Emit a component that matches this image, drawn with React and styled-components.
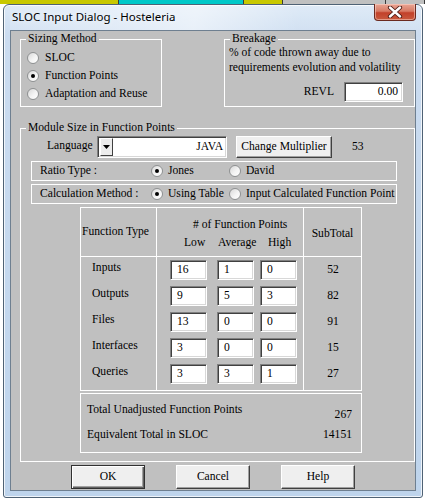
import React from "react";
import styled, { createGlobalStyle } from "styled-components";

const GlobalStyle = createGlobalStyle`
  html, body {
    margin: 0;
    padding: 0;
    background: #fff;
    width: 425px;
    height: 499px;
    overflow: hidden;
  }
  * { box-sizing: border-box; }
`;

const Page = styled.div`
  width: 425px;
  height: 499px;
  display: flex;
  flex-direction: column;
`;

const Strip = styled.div`
  display: flex;
  height: 4px;
`;

const StripPart = styled.div`
  width: ${(p) => p.$w}px;
  background: ${(p) => p.$c};
  border-right: 1px solid #3a3a3a;
`;

const Window = styled.div`
  margin-left: 3px;
  width: 420px;
  height: 494px;
  border: 1px solid #4f6275;
  border-radius: 6px 6px 3px 3px;
  background: linear-gradient(180deg, #dbe8f6 0px, #cbdcf0 30px, #bed4ec 100%);
  box-shadow: inset 0 0 0 1px rgba(255, 255, 255, 0.75);
  display: flex;
  flex-direction: column;
  padding: 0 6px 6px 6px;
`;

const TitleBar = styled.div`
  height: 25px;
  display: flex;
  align-items: flex-start;
  margin: 0 -6px 0 0;
  padding-left: 2px;
  background: linear-gradient(100deg, rgba(255,255,255,0.15) 0%, rgba(255,255,255,0.55) 45%, rgba(255,255,255,0.1) 70%);
`;

const Title = styled.span`
  font-family: "Noto Sans", "Open Sans", sans-serif;
  font-size: 11.5px;
  line-height: 14px;
  margin-top: 5px;
  color: #000;
  text-shadow: 0 0 6px rgba(255, 255, 255, 0.9);
`;

const CloseButton = styled.div`
  margin-left: auto;
  margin-right: 6px;
  margin-top: -1px;
  width: 42px;
  height: 17px;
  border: 1px solid #6b2a20;
  border-top: none;
  border-radius: 0 0 4px 4px;
  background: linear-gradient(180deg, #e9a594 0%, #d77a64 45%, #c2412a 55%, #c85a3e 100%);
  box-shadow: inset 0 0 0 1px rgba(255, 220, 210, 0.5);
  display: flex;
  align-items: center;
  justify-content: center;
`;

const Client = styled.div`
  flex: 1;
  background: #c0c0c0;
  border: 1px solid #6e7f90;
  display: flex;
  flex-direction: column;
  padding: 1px 0 1px 9px;
  font-family: "Liberation Serif", "Times New Roman", serif;
  font-size: 11.6px;
  line-height: 14px;
  color: #000;
`;

const TopRow = styled.div`
  display: flex;
  justify-content: space-between;
  height: 75px;
`;

const Group = styled.fieldset`
  margin: 0;
  padding: 0;
  border: 1px solid #fff;
  min-width: 0;
  width: ${(p) => p.$w}px;
`;

const Legend = styled.legend`
  margin-left: 5px;
  padding: 0 2px;
  font-size: 11.6px;
  line-height: 14px;
`;

const RadioList = styled.div`
  display: flex;
  flex-direction: column;
  padding: 3px 0 0 6px;
`;

const RadioRow = styled.label`
  display: flex;
  align-items: center;
  gap: 6px;
  height: 18px;
  white-space: nowrap;
`;

const RadioCircle = styled.span`
  position: relative;
  flex: none;
  width: 12px;
  height: 12px;
  border-radius: 50%;
  border: 1px solid #8f9192;
  background: linear-gradient(135deg, #d8d8d8 0%, #f4f4f4 55%, #fff 100%);
  &::after {
    content: "";
    display: ${(p) => (p.$on ? "block" : "none")};
    position: absolute;
    left: 3px;
    top: 3px;
    width: 4px;
    height: 4px;
    border-radius: 50%;
    background: #000;
  }
`;

const BreakText = styled.div`
  padding-left: 4px;
  margin-top: -1px;
  line-height: 15px;
`;

const RevlRow = styled.div`
  display: flex;
  justify-content: flex-end;
  align-items: center;
  gap: 10px;
  margin-top: 7px;
  padding-right: 11px;
`;

const TextBox = styled.div`
  width: ${(p) => p.$w}px;
  height: 20px;
  background: #fff;
  border-top: 1px solid #808080;
  border-left: 1px solid #808080;
  border-right: 1px solid #fff;
  border-bottom: 1px solid #fff;
  box-shadow: inset 1px 1px 0 #404040, inset -1px -1px 0 #d8d8d8;
  display: flex;
  align-items: center;
  justify-content: ${(p) => (p.$right ? "flex-end" : "flex-start")};
  padding: 0 4px 0 6px;
`;

const ModuleGroup = styled(Group)`
  margin-top: 14px;
  height: 341px;
`;

const ModuleBody = styled.div`
  display: flex;
  flex-direction: column;
  padding-top: 1px;
`;

const LangRow = styled.div`
  display: flex;
  align-items: center;
  height: 22px;
  padding-left: 26px;
`;

const LangLabel = styled.span`
  width: 50px;
  margin-top: -3px;
`;

const Combo = styled.div`
  width: 130px;
  height: 22px;
  background: #fff;
  border-top: 1px solid #808080;
  border-left: 1px solid #808080;
  border-right: 1px solid #fff;
  border-bottom: 1px solid #fff;
  box-shadow: inset 1px 1px 0 #404040, inset -1px -1px 0 #d8d8d8;
  display: flex;
  align-items: center;
  padding: 1px 3px 1px 2px;
`;

const ComboButton = styled.div`
  width: 13px;
  height: 18px;
  background: #ececec;
  border: 1px solid;
  border-color: #fff #404040 #404040 #fff;
  display: flex;
  align-items: center;
  justify-content: center;
`;

const ComboValue = styled.span`
  margin-left: auto;
`;

const Button = styled.div`
  width: ${(p) => p.$w}px;
  height: ${(p) => p.$h}px;
  background: #efefef;
  border: 1px solid;
  border-color: ${(p) => (p.$default ? "#303030" : "#fff #404040 #404040 #fff")};
  box-shadow: ${(p) =>
    p.$default
      ? "inset 1px 1px 0 #fff, inset -1px -1px 0 #606060, inset -2px -2px 0 #a0a0a0"
      : "inset -1px -1px 0 #a0a0a0"};
  display: flex;
  align-items: center;
  justify-content: center;
  white-space: nowrap;
`;

const MultValue = styled.span`
  margin-left: 20px;
`;

const OptionBox = styled.div`
  margin: 3px 0 0 10px;
  width: 366px;
  height: 20px;
  border: 1px solid #fff;
  display: grid;
  grid-template-columns: 111px 78px auto;
  align-items: center;
  padding-left: 8px;
  white-space: nowrap;
`;

const OptionLabel = styled.label`
  display: flex;
  align-items: center;
  gap: 5px;
`;

const Table = styled.div`
  margin: 3px 0 0 59px;
  width: 282px;
  height: 184px;
  border: 1px solid #fff;
  display: grid;
  grid-template-columns: 76px 147px 57px;
  grid-template-rows: 49px 1fr;
`;

const HeadCell = styled.div`
  border-bottom: 1px solid #fff;
  border-right: ${(p) => (p.$last ? "none" : "1px solid #fff")};
  display: flex;
  flex-direction: column;
  justify-content: ${(p) => (p.$top ? "flex-start" : "center")};
  align-items: ${(p) => (p.$center ? "center" : "flex-start")};
  padding: ${(p) => p.$pad || "0"};
  white-space: nowrap;
`;

const SubHeads = styled.div`
  display: flex;
  margin-top: 4px;
  margin-left: -9px;
`;

const SubHead = styled.span`
  width: ${(p) => p.$w}px;
`;

const BodyCol = styled.div`
  border-right: ${(p) => (p.$last ? "none" : "1px solid #fff")};
  display: flex;
  flex-direction: column;
  padding-top: 3px;
`;

const BodyRow = styled.div`
  height: 26px;
  display: flex;
  align-items: flex-start;
  justify-content: ${(p) => (p.$center ? "center" : "flex-start")};
  padding: ${(p) => p.$pad || "0"};
`;

const Spacer = styled.span`
  width: ${(p) => p.$w}px;
  flex: none;
`;

const Totals = styled.div`
  margin: 2px 0 0 59px;
  width: 282px;
  height: 60px;
  border: 1px solid #fff;
  display: grid;
  grid-template-columns: 1fr auto;
  grid-template-rows: 25px 1fr;
  padding: 9px 9px 0 6px;
`;

const TotalValue = styled.span`
  padding-top: ${(p) => p.$top || 0}px;
  text-align: right;
`;

const ButtonRow = styled.div`
  display: flex;
  justify-content: center;
  gap: 31px;
  margin-top: 3px;
  margin-left: -9px;
`;

const Radio = ({ on, children }) => (
  <RadioRow>
    <RadioCircle $on={on} />
    {children}
  </RadioRow>
);

const Option = ({ on, children }) => (
  <OptionLabel>
    <RadioCircle $on={on} />
    {children}
  </OptionLabel>
);

const rows = [
  { name: "Inputs", low: 16, avg: 1, high: 0, sub: 52 },
  { name: "Outputs", low: 9, avg: 5, high: 3, sub: 82 },
  { name: "Files", low: 13, avg: 0, high: 0, sub: 91 },
  { name: "Interfaces", low: 3, avg: 0, high: 0, sub: 15 },
  { name: "Queries", low: 3, avg: 3, high: 1, sub: 27 },
];

export default function App() {
  return (
    <Page>
      <GlobalStyle />
      <Strip>
        <StripPart $w={119} $c="#c8c800" />
        <StripPart $w={125} $c="#00c8c8" />
        <StripPart $w={39} $c="#c8c800" />
        <StripPart $w={103} $c="#c0c0c0" />
        <StripPart $w={39} $c="#c0c0c0" />
      </Strip>
      <Window>
        <TitleBar>
          <Title>SLOC Input Dialog - Hosteleria</Title>
          <CloseButton>
            <svg width="16" height="12" viewBox="0 0 16 12">
              <path d="M3 1.5 L13 10.5 M13 1.5 L3 10.5" stroke="#4a1a14" strokeWidth="4.2" strokeLinecap="round" />
              <path d="M3 1.5 L13 10.5 M13 1.5 L3 10.5" stroke="#fff" strokeWidth="2.4" strokeLinecap="round" />
            </svg>
          </CloseButton>
        </TitleBar>
        <Client>
          <TopRow>
            <Group $w={142}>
              <Legend>Sizing Method</Legend>
              <RadioList>
                <Radio>SLOC</Radio>
                <Radio on>Function Points</Radio>
                <Radio>Adaptation and Reuse</Radio>
              </RadioList>
            </Group>
            <Group $w={191}>
              <Legend>Breakage</Legend>
              <BreakText>
                % of code thrown away due to
                <br />
                requirements evolution and volatility
              </BreakText>
              <RevlRow>
                <span>REVL</span>
                <TextBox $w={59} $right>0.00</TextBox>
              </RevlRow>
            </Group>
          </TopRow>

          <ModuleGroup $w={395}>
            <Legend>Module Size in Function Points</Legend>
            <ModuleBody>
              <LangRow>
                <LangLabel>Language</LangLabel>
                <Combo>
                  <ComboButton>
                    <svg width="7" height="4" viewBox="0 0 7 4">
                      <path d="M0 0 H7 L3.5 4 Z" fill="#000" />
                    </svg>
                  </ComboButton>
                  <ComboValue>JAVA</ComboValue>
                </Combo>
                <Spacer $w={9} />
                <Button $w={96} $h={22}>Change Multiplier</Button>
                <MultValue>53</MultValue>
              </LangRow>

              <OptionBox>
                <span>Ratio Type :</span>
                <Option on>Jones</Option>
                <Option>David</Option>
              </OptionBox>
              <OptionBox>
                <span>Calculation Method :</span>
                <Option on>Using Table</Option>
                <Option>Input Calculated Function Point</Option>
              </OptionBox>

              <Table>
                <HeadCell $pad="0 0 0 1px">Function Type</HeadCell>
                <HeadCell $top $pad="10px 0 0 36px">
                  <span># of Function Points</span>
                  <SubHeads>
                    <SubHead $w={34}>Low</SubHead>
                    <SubHead $w={50}>Average</SubHead>
                    <SubHead $w={30}>High</SubHead>
                  </SubHeads>
                </HeadCell>
                <HeadCell $last $center $pad="4px 0 0 0">SubTotal</HeadCell>

                <BodyCol>
                  {rows.map((r) => (
                    <BodyRow key={r.name} $pad="1px 0 0 11px">{r.name}</BodyRow>
                  ))}
                </BodyCol>
                <BodyCol>
                  {rows.map((r) => (
                    <BodyRow key={r.name} $pad="0 0 0 13px">
                      <TextBox $w={37}>{r.low}</TextBox>
                      <Spacer $w={10} />
                      <TextBox $w={37}>{r.avg}</TextBox>
                      <Spacer $w={6} />
                      <TextBox $w={37}>{r.high}</TextBox>
                    </BodyRow>
                  ))}
                </BodyCol>
                <BodyCol $last>
                  {rows.map((r) => (
                    <BodyRow key={r.name} $center $pad="3px 0 0 1px">{r.sub}</BodyRow>
                  ))}
                </BodyCol>
              </Table>

              <Totals>
                <span>Total Unadjusted Function Points</span>
                <TotalValue $top={5}>267</TotalValue>
                <span>Equivalent Total in SLOC</span>
                <TotalValue>14151</TotalValue>
              </Totals>
            </ModuleBody>
          </ModuleGroup>

          <ButtonRow>
            <Button $w={74} $h={24} $default>OK</Button>
            <Button $w={74} $h={24}>Cancel</Button>
            <Button $w={74} $h={24}>Help</Button>
          </ButtonRow>
        </Client>
      </Window>
    </Page>
  );
}
